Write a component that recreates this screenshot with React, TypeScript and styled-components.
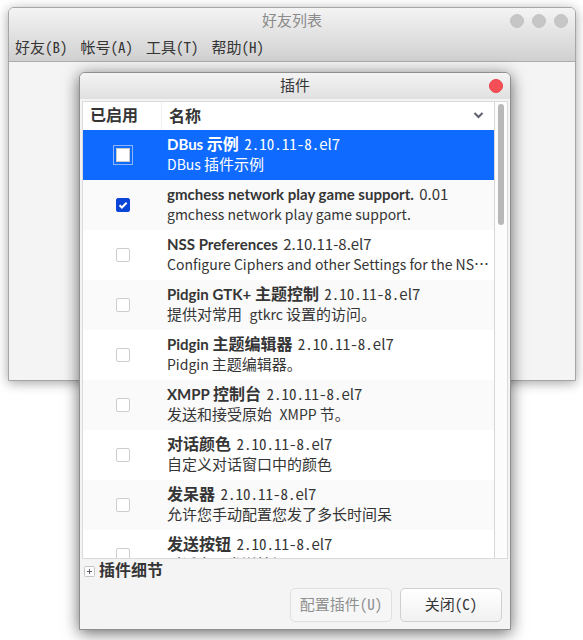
import React, { Fragment, useState } from "react";
import styled, { createGlobalStyle, css } from "styled-components";

const cjk = '"Noto Sans CJK SC", "Noto Sans", sans-serif';
const heading = 'Lato, "Noto Sans CJK SC", sans-serif';

const GlobalStyle = createGlobalStyle`
  * { box-sizing: border-box; }
  body {
    margin: 0;
    background: #ffffff;
    color: #353535;
    font-family: ${cjk};
    font-size: 14px;
    line-height: 20px;
    overflow: hidden;
  }
  button { font: inherit; color: inherit; }
`;

const Desktop = styled.div`
  position: relative;
  min-height: 100vh;
  padding: 7px 7px 7px 8px;
`;

const windowFrame = css`
  border: 1px solid #a6a6a6;
  border-radius: 6px 6px 0 0;
  background: #f4f4f4;
`;

const MainWindow = styled.main`
  ${windowFrame}
  box-shadow: 0 2px 12px rgba(0, 0, 0, 0.36);
`;

const MainHeader = styled.header`
  border-bottom: 1px solid #adadad;
  border-radius: 5px 5px 0 0;
  background: linear-gradient(#f4f4f4, #d0d0d0);
`;

const MainBody = styled.div`
  min-height: 318px;
`;

const TitleBar = styled.div`
  display: grid;
  grid-template-columns: 1fr auto 1fr;
  align-items: center;
  height: 26px;
  padding: 0 7px;
`;

const Title = styled.h1<{ $muted?: boolean }>`
  grid-column: 2;
  margin: 0;
  padding-bottom: 2px;
  color: ${(p) => (p.$muted ? "#8b8b8b" : "#353535")};
  font-size: 15px;
  font-weight: 400;
  line-height: 20px;
`;

const WindowControls = styled.div`
  display: flex;
  justify-content: flex-end;
  gap: 8px;
`;

const WindowButton = styled.button<{ $active?: boolean }>`
  width: 14px;
  height: 14px;
  padding: 0;
  border: 1px solid ${(p) => (p.$active ? "#e9424b" : "#c3c3c3")};
  border-radius: 50%;
  background: ${(p) => (p.$active ? "#f44e56" : "#c6c6c6")};
`;

const MenuBar = styled.nav`
  display: flex;
  gap: 13px;
  height: 27px;
  padding: 0 6px 2px;
`;

const MenuItem = styled.button`
  padding: 0;
  border: 0;
  background: none;
  font-size: 15px;
  line-height: 20px;
`;

const Dialog = styled.section`
  ${windowFrame}
  position: absolute;
  top: 72px;
  left: 79px;
  right: 72px;
  border-color: #8f8f8f;
  box-shadow: 0 3px 16px rgba(0, 0, 0, 0.6);
`;

const DialogHeader = styled.header`
  border-radius: 5px 5px 0 0;
  background: linear-gradient(#f4f4f4, #e0e0e0);
`;

const DialogBody = styled.div`
  padding: 2px;
`;

const ListFrame = styled.div`
  display: flex;
  border: 1px solid #dadbde;
  background: #ffffff;
`;

const Scroller = styled.div`
  flex: 1;
  min-width: 0;
  height: calc(100vh - 184px);
  overflow: auto;
  scrollbar-width: none;
`;

const ScrollTrack = styled.div`
  display: flex;
  justify-content: center;
  width: 13px;
  padding-top: 2px;
  border-left: 1px solid #d5d6d9;
  background: #fcfcfc;
`;

const ScrollThumb = styled.div`
  width: 6px;
  height: 121px;
  border-radius: 3px;
  background: #b8b8b8;
`;

const Table = styled.table`
  width: 100%;
  table-layout: fixed;
  border-spacing: 0;
`;

const HeadCell = styled.th<{ $narrow?: boolean }>`
  position: sticky;
  top: 0;
  z-index: 1;
  width: ${(p) => (p.$narrow ? "79px" : "auto")};
  height: 28px;
  padding: 0 7px 2px;
  border-right: ${(p) => (p.$narrow ? "1px solid #efefef" : "0")};
  background: #ffffff;
  text-align: left;
`;

const SortButton = styled.button`
  display: flex;
  align-items: center;
  justify-content: space-between;
  width: 100%;
  padding: 0 3px 0 0;
  border: 0;
  background: none;
`;

const Row = styled.tr<{ $selected: boolean }>`
  height: 50px;
  background: #ffffff;
  &:nth-child(even) { background: #fafafa; }
  ${(p) =>
    p.$selected &&
    css`
      &, &:nth-child(even) { background: #0f6bff; }
      color: #ffffff;
    `}
`;

const CheckCell = styled.td`
  padding: 0;
  text-align: center;
  vertical-align: middle;
`;

const NameCell = styled.td`
  padding: 0 0 2px 5px;
  vertical-align: middle;
`;

const CheckLabel = styled.label`
  display: flex;
  justify-content: center;
  padding-left: 1px;
`;

const tick =
  "url(\"data:image/svg+xml,%3Csvg xmlns='http://www.w3.org/2000/svg' viewBox='0 0 14 14'%3E%3Cpath d='M3.5 7.2l2.4 2.3 4.7-4.8' fill='none' stroke='white' stroke-width='2'/%3E%3C/svg%3E\")";

const CheckBox = styled.input<{ $focused: boolean }>`
  appearance: none;
  width: 14px;
  height: 14px;
  margin: 0;
  border: 1px solid #cdcdcd;
  border-radius: 2px;
  background: #ffffff;
  &:checked {
    border-color: #0a45d8;
    background: #0a45d8 ${tick} center / 14px 14px;
  }
  ${(p) =>
    p.$focused &&
    css`
      border-radius: 0;
      outline: 1px solid #8db6fa;
      outline-offset: 2px;
    `}
`;

const Line = styled.div`
  height: 20px;
  white-space: pre;
`;

const Strong = styled.strong`
  font-family: ${heading};
  font-size: 15px;
  font-weight: 700;
  line-height: 16px;
`;

const VersionText = styled.span`
  margin-left: 2px;
  font-size: 15px;
  line-height: 16px;
`;

const Han = styled.span<{ $bold?: boolean }>`
  font-family: ${cjk};
  font-size: ${(p) => (p.$bold ? "16px" : "15px")};
  line-height: 16px;
`;

const HalfWidth = styled.span`
  font-family: ${cjk};
  font-size: 15px;
  font-feature-settings: "hwid";
  line-height: 16px;
`;

const Footer = styled.footer`
  padding: 1px 6px 5px 2px;
`;

const Expander = styled.button`
  display: flex;
  align-items: center;
  gap: 4px;
  height: 22px;
  padding: 0;
  border: 0;
  background: none;
`;

const ExpanderLabel = styled(Strong)`
  padding-bottom: 3px;
`;

const Actions = styled.div`
  display: flex;
  justify-content: flex-end;
  gap: 8px;
  padding-top: 6px;
`;

const ActionButton = styled.button`
  width: 102px;
  height: 34px;
  padding: 0 0 2px;
  border: 1px solid #cfcfcf;
  border-radius: 5px;
  background: linear-gradient(#ffffff, #f1f1f1);
  font-size: 15px;
  &:disabled {
    border-color: #e0e0e0;
    background: #f6f6f6;
    color: #8f8f8f;
  }
`;

/* Han runs are set larger than Latin ones; access keys and spaces after Han are half-width. */
function Mixed({ text, bold }: { text: string; bold?: boolean }) {
  const parts = text.match(/[\u2e80-\u9fff⋯]+|\([A-Z]\)|(?<=[\u2e80-\u9fff]) +|[^\u2e80-\u9fff⋯(]+/g) ?? [];
  return (
    <>
      {parts.map((part, i) => {
        if (/[\u2e80-\u9fff⋯]/.test(part)) return <Han key={i} $bold={bold}>{part}</Han>;
        if (/^( +|\([A-Z]\))$/.test(part)) return <HalfWidth key={i}>{part}</HalfWidth>;
        return <Fragment key={i}>{part}</Fragment>;
      })}
    </>
  );
}

type Plugin = { name: string; version: string; detail: string };

const release = "2.10.11-8.el7";

const plugins: Plugin[] = [
  { name: "DBus 示例", version: release, detail: "DBus 插件示例" },
  { name: "gmchess network play game support.", version: "0.01", detail: "gmchess network play game support." },
  { name: "NSS Preferences", version: release, detail: "Configure Ciphers and other Settings for the NS⋯" },
  { name: "Pidgin GTK+ 主题控制", version: release, detail: "提供对常用 gtkrc 设置的访问。" },
  { name: "Pidgin 主题编辑器", version: release, detail: "Pidgin 主题编辑器。" },
  { name: "XMPP 控制台", version: release, detail: "发送和接受原始 XMPP 节。" },
  { name: "对话颜色", version: release, detail: "自定义对话窗口中的颜色" },
  { name: "发呆器", version: release, detail: "允许您手动配置您发了多长时间呆" },
  { name: "发送按钮", version: release, detail: "对话窗口发送按钮。" },
];

function Version({ plugin }: { plugin: Plugin }) {
  if (!/[\u2e80-\u9fff]$/.test(plugin.name)) return <VersionText> {plugin.version}</VersionText>;
  const [, digits, rest] = plugin.version.match(/^([\d.-]*)(.*)$/)!;
  return (
    <VersionText>
      {" "}
      <HalfWidth>{digits}</HalfWidth>
      {rest}
    </VersionText>
  );
}

function PluginRow({ plugin, selected, enabled, onSelect, onToggle }: {
  plugin: Plugin;
  selected: boolean;
  enabled: boolean;
  onSelect: () => void;
  onToggle: () => void;
}) {
  return (
    <Row $selected={selected} onClick={onSelect}>
      <CheckCell>
        <CheckLabel>
          <CheckBox
            type="checkbox"
            aria-label={plugin.name}
            $focused={selected}
            checked={enabled}
            onChange={onToggle}
          />
        </CheckLabel>
      </CheckCell>
      <NameCell>
        <Line>
          <Strong><Mixed text={plugin.name} bold /></Strong>
          <Version plugin={plugin} />
        </Line>
        <Line><Mixed text={plugin.detail} /></Line>
      </NameCell>
    </Row>
  );
}

function ChevronIcon() {
  return (
    <svg width="11" height="8" viewBox="0 0 11 8" aria-hidden="true">
      <path d="M1.5 2l4 4 4-4" fill="none" stroke="#5c616c" strokeWidth="2" />
    </svg>
  );
}

function PlusBoxIcon() {
  return (
    <svg width="11" height="11" viewBox="0 0 11 11" aria-hidden="true">
      <rect x="0.5" y="0.5" width="10" height="10" rx="1" fill="#fcfcfc" stroke="#c4c4c4" />
      <path d="M3 5.5h5M5.5 3v5" stroke="#5c616c" />
    </svg>
  );
}

export default function App() {
  const [selected, setSelected] = useState(0);
  const [enabled, setEnabled] = useState<number[]>([1]);
  const toggle = (i: number) =>
    setEnabled((list) => (list.includes(i) ? list.filter((n) => n !== i) : [...list, i]));

  return (
    <Desktop lang="zh-CN">
      <GlobalStyle />
      <MainWindow>
        <MainHeader>
          <TitleBar>
            <Title $muted>好友列表</Title>
            <WindowControls>
              <WindowButton aria-label="最小化" />
              <WindowButton aria-label="最大化" />
              <WindowButton aria-label="关闭" />
            </WindowControls>
          </TitleBar>
          <MenuBar>
            {["好友(B)", "帐号(A)", "工具(T)", "帮助(H)"].map((item) => (
              <MenuItem key={item}><Mixed text={item} /></MenuItem>
            ))}
          </MenuBar>
        </MainHeader>
        <MainBody />
      </MainWindow>

      <Dialog role="dialog" aria-label="插件">
        <DialogHeader>
          <TitleBar>
            <Title as="h2">插件</Title>
            <WindowControls>
              <WindowButton $active aria-label="关闭" />
            </WindowControls>
          </TitleBar>
        </DialogHeader>
        <DialogBody>
          <ListFrame>
            <Scroller>
              <Table>
                <thead>
                  <tr>
                    <HeadCell $narrow><Mixed text="已启用" bold /></HeadCell>
                    <HeadCell>
                      <SortButton>
                        <Strong><Mixed text="名称" bold /></Strong>
                        <ChevronIcon />
                      </SortButton>
                    </HeadCell>
                  </tr>
                </thead>
                <tbody>
                  {plugins.map((plugin, i) => (
                    <PluginRow
                      key={plugin.name}
                      plugin={plugin}
                      selected={selected === i}
                      enabled={enabled.includes(i)}
                      onSelect={() => setSelected(i)}
                      onToggle={() => toggle(i)}
                    />
                  ))}
                </tbody>
              </Table>
            </Scroller>
            <ScrollTrack><ScrollThumb /></ScrollTrack>
          </ListFrame>
          <Footer>
            <Expander aria-expanded="false">
              <PlusBoxIcon />
              <ExpanderLabel><Mixed text="插件细节" bold /></ExpanderLabel>
            </Expander>
            <Actions>
              <ActionButton disabled><Mixed text="配置插件(U)" /></ActionButton>
              <ActionButton><Mixed text="关闭(C)" /></ActionButton>
            </Actions>
          </Footer>
        </DialogBody>
      </Dialog>
    </Desktop>
  );
}
